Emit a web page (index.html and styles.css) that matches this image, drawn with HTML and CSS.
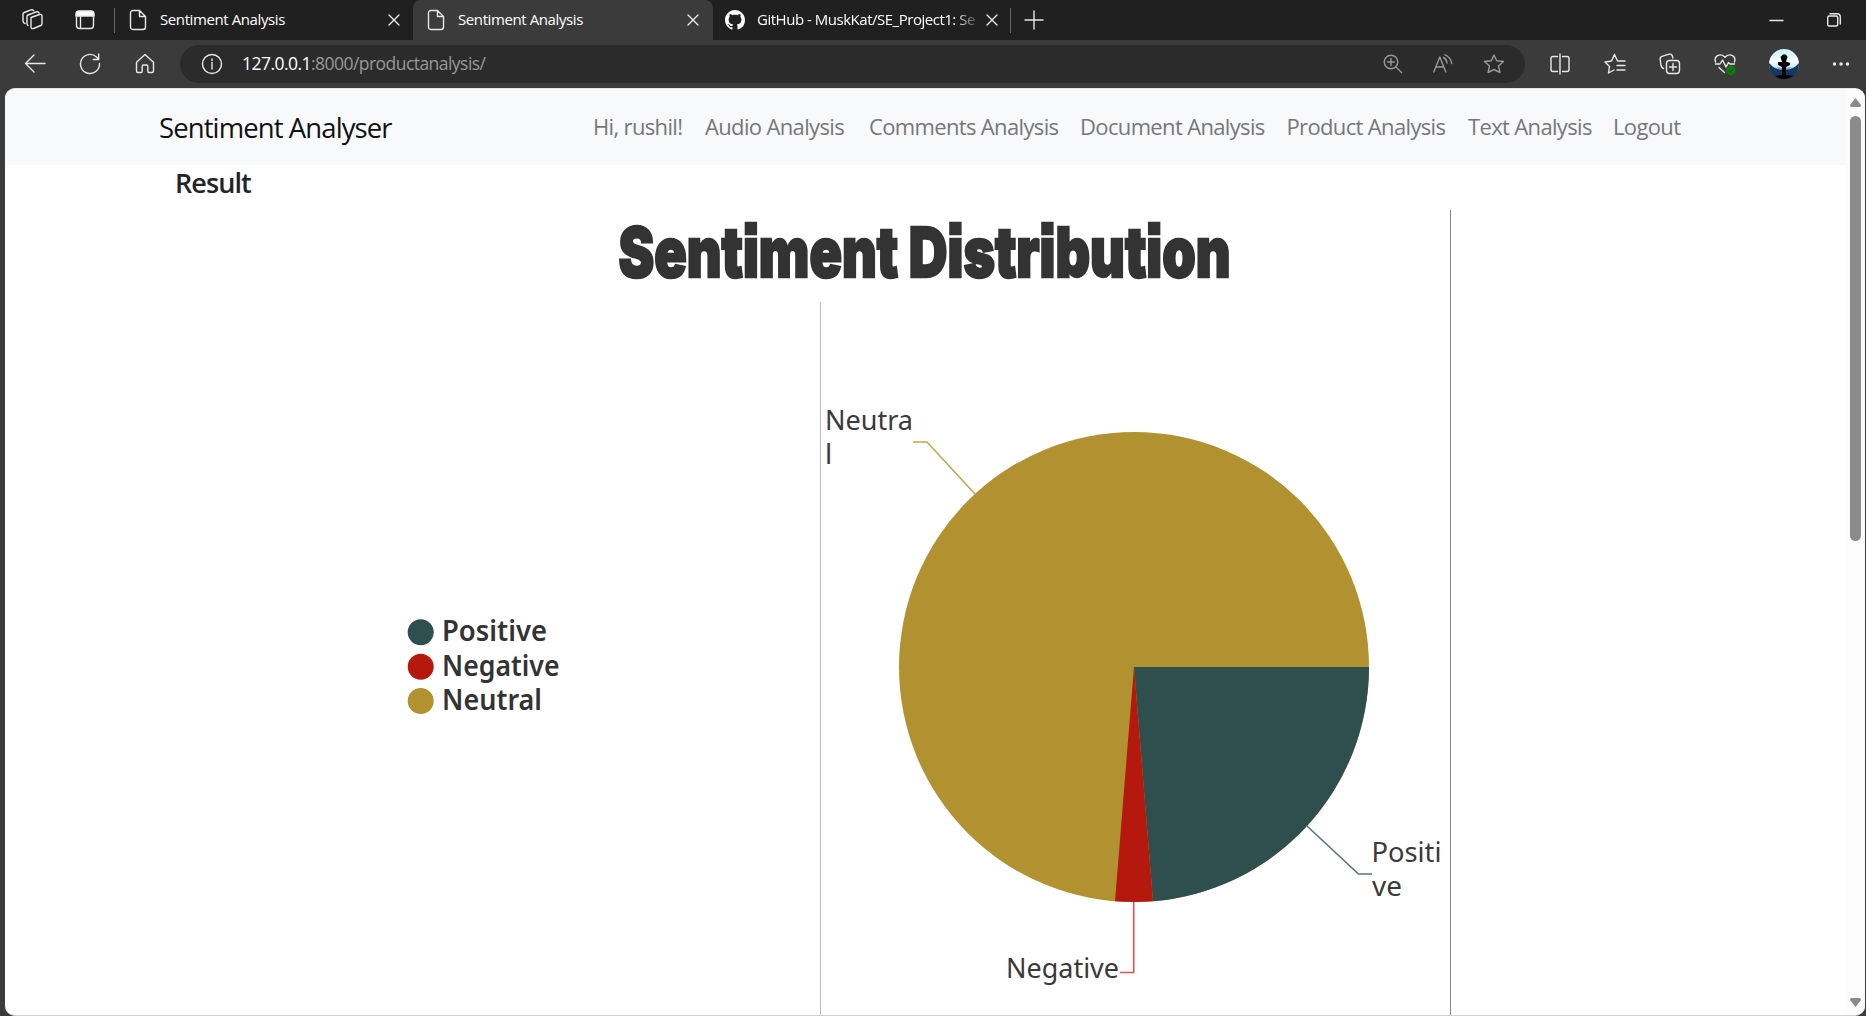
FILE: index.html
```html
<!DOCTYPE html>
<html lang="en">
<head>
<meta charset="utf-8">
<title>Sentiment Analysis</title>
<link rel="stylesheet" href="styles.css">
</head>
<body>
<header class="tabstrip">
  <div class="tab-tools">
    <svg class="ico workspaces" width="22" height="22" viewBox="0 0 22 22"><path d="M9 8.5 17.500 5.500Q20 5 20 7V14.500Q20 16 18.800 16.500L11.500 19.500Q9 20 9 18Z M6 16.500Q5 16 5 14.500V7.500Q5 6.500 6 6L14.500 2.800Q16.500 2.300 17 4 M3 14.500Q1 14 1 12V5Q1 4 2.200 3.500L9 .900Q11 .200 12 2"/></svg>
    <svg class="ico" width="20" height="20" viewBox="0 0 20 20"><rect x="1.500" y="1.500" width="17" height="17" rx="3"/><path d="M5.500 6V18"/><path class="fill" d="M1 6V4Q1 1 4 1H16Q19 1 19 4V6Z"/></svg>
  </div>
  <i class="sep"></i>
  <div class="tab first">
    <svg class="ico" width="18" height="22" viewBox="0 0 18 22"><path d="M4 1.500H10.500L16.500 7.500V18Q16.500 20.500 14 20.500H4Q1.500 20.500 1.500 18V4Q1.500 1.500 4 1.500ZM10.500 1.500V7.500H16.500"/></svg>
    <span class="tab-title">Sentiment Analysis</span>
    <svg class="ico x" width="12" height="12" viewBox="0 0 12 12"><path d="M1 1 11 11M11 1 1 11"/></svg>
  </div>
  <div class="tab active">
    <svg class="ico" width="18" height="22" viewBox="0 0 18 22"><path d="M4 1.500H10.500L16.500 7.500V18Q16.500 20.500 14 20.500H4Q1.500 20.500 1.500 18V4Q1.500 1.500 4 1.500ZM10.500 1.500V7.500H16.500"/></svg>
    <span class="tab-title">Sentiment Analysis</span>
    <svg class="ico x" width="12" height="12" viewBox="0 0 12 12"><path d="M1 1 11 11M11 1 1 11"/></svg>
  </div>
  <div class="tab github">
    <svg class="octo" width="20" height="20" viewBox="0 0 16 16"><path d="M8 0C3.580 0 0 3.580 0 8c0 3.540 2.290 6.530 5.470 7.590.4.070.550-.170.550-.380 0-.190-.010-.820-.010-1.490-2.010.370-2.530-.490-2.690-.940-.090-.230-.480-.940-.820-1.130-.280-.150-.680-.520-.010-.530.630-.010 1.080.580 1.230.820.720 1.210 1.870.870 2.330.660.070-.520.280-.870.510-1.070-1.780-.200-3.640-.890-3.640-3.950 0-.870.310-1.590.820-2.150-.080-.200-.360-1.020.080-2.120 0 0 .670-.210 2.200.820.640-.180 1.320-.270 2-.270s1.360.090 2 .270c1.530-1.040 2.200-.820 2.200-.820.440 1.100.160 1.920.080 2.120.510.560.820 1.270.820 2.150 0 3.070-1.870 3.750-3.650 3.950.290.250.540.730.540 1.480 0 1.070-.010 1.930-.010 2.200 0 .210.150.460.550.380A8.010 8.010 0 0 0 16 8c0-4.420-3.580-8-8-8z"/></svg>
    <span class="tab-title fade">GitHub - MuskKat/SE_Project1: Se</span>
    <svg class="ico x" width="12" height="12" viewBox="0 0 12 12"><path d="M1 1 11 11M11 1 1 11"/></svg>
  </div>
  <i class="sep"></i>
  <svg class="ico plus" width="18" height="18" viewBox="0 0 18 18"><path d="M9 0V18M0 9H18"/></svg>
  <div class="window-buttons">
    <svg class="ico" width="14" height="14" viewBox="0 0 14 14"><path d="M0 7.500H13"/></svg>
    <svg class="ico" width="14" height="14" viewBox="0 0 14 14"><rect x=".7" y="3" width="10" height="10" rx="1.500"/><path d="M3 .700H10Q13.300 .700 13.300 4V11"/></svg>
  </div>
</header>

<div class="toolbar">
  <svg class="ico" width="22" height="22" viewBox="0 0 22 22"><path d="M21 10.500H1.500M10 2 1.500 10.500 10 19"/></svg>
  <svg class="ico" width="22" height="22" viewBox="0 0 22 22"><path d="M20.500 10.500A9.500 9.500 0 1 1 17.500 4L19.500 6M19.700 1V6.500H14.200"/></svg>
  <svg class="ico" width="22" height="22" viewBox="0 0 22 22"><path d="M2.500 9.300 11 1.500 19.500 9.300V18Q19.500 19.500 18 19.500H15Q13.800 19.500 13.800 18V13.500Q13.800 12 12.500 12H9.500Q8.200 12 8.200 13.500V18Q8.200 19.500 7 19.500H4Q2.500 19.500 2.500 18Z"/></svg>
  <div class="address">
    <svg class="ico" width="22" height="22" viewBox="0 0 22 22"><circle cx="11" cy="11" r="9.500"/><path d="M11 9.500V16M11 6V7.500"/></svg>
    <span class="url"><b>127.0.0.1</b>:8000/productanalysis/</span>
    <div class="address-tools">
      <svg class="ico" width="20" height="20" viewBox="0 0 20 20"><circle cx="8" cy="8" r="6.800"/><path d="M13 13 18.500 18.500M8 4.500V11.500M4.500 8H11.500"/></svg>
      <svg class="ico" width="20" height="20" viewBox="0 0 20 20"><path d="M.800 18 6.800 3 12.800 18M3 13H10.700M10.500 3.500Q13.500 5 14 9M12 .800Q17.500 3 18.800 9.500"/></svg>
      <svg class="ico" width="22" height="22" viewBox="0 0 22 22"><path d="M11 2 13.700 7.800 20.500 8.500 15.500 13 17 19.500 11 16.500 5 19.500 6.500 13 1.500 8.500 8.300 7.800Z"/></svg>
    </div>
  </div>
  <div class="tools">
    <svg class="ico" width="22" height="22" viewBox="0 0 22 22"><path d="M8.500 3.500H4Q2 3.500 2 5.500V16.500Q2 18.500 4 18.500H8.500M13.500 3.500H18Q20 3.500 20 5.500V16.500Q20 18.500 18 18.500H13.500M11 1V21"/></svg>
    <svg class="ico" width="22" height="22" viewBox="0 0 22 22"><path d="M13.500 8 10.500 1.500 7.500 8 1 9 5.500 13.500 4.500 20 10 17M13.500 8H21M13 12.500H21M13 17H21"/></svg>
    <svg class="ico" width="22" height="22" viewBox="0 0 22 22"><rect x="7.500" y="7.500" width="13" height="13" rx="3"/><path d="M14 10.500V17.500M10.500 14H17.500M4.500 15.500Q2.500 14.500 2 12.500L1.200 6.500Q.900 4 3 3.300L10 1.200Q13 .600 13.600 3.500L13.800 5"/></svg>
    <svg class="ico" width="22" height="22" viewBox="0 0 22 22"><path d="M1.500 9Q0 4 4 2.300Q8 .800 11 4.200Q14 .800 18 2.300Q22 4 20.500 9M1.500 11H6L8.500 7 12 14 14.500 9.500 16 11H20.500M5 14.500 10.500 19.500"/><circle class="badge" cx="17" cy="17.500" r="4.700"/><path class="tick" d="M15 17.500 16.500 19 19 16"/></svg>
    <svg class="avatar" width="30" height="30" viewBox="0 0 30 30"><defs><clipPath id="round"><circle cx="15" cy="15" r="15"/></clipPath><linearGradient id="sky" x2="0" y2="1"><stop offset="0" stop-color="#c5f1f6"/><stop offset=".4" stop-color="#f8ffff"/><stop offset=".58" stop-color="#dcecf8"/><stop offset=".75" stop-color="#1c4372"/><stop offset="1" stop-color="#06101f"/></linearGradient></defs><g clip-path="url(#round)"><rect width="30" height="30" fill="url(#sky)"/><path fill="#133865" d="M0 14Q6 21 13 21V30H0ZM30 14Q24 21 17 21V30H30Z"/><path d="M13 18 9 16V13L13 13 11.500 8 14 5.500H17L18.500 8 17 12.500 21 14V16L17 18V30H13ZM0 28Q15 24 30 28V30H0Z"/></g></svg>
    <svg class="dots" width="18" height="6" viewBox="0 0 18 6"><circle cx="2.500" cy="3" r="1.700"/><circle cx="9" cy="3" r="1.700"/><circle cx="15.500" cy="3" r="1.700"/></svg>
  </div>
</div>

<div class="viewport">
  <main class="page">
    <nav class="navbar">
      <span class="brand">Sentiment Analyser</span>
      <div class="links"><a>Hi, rushil!</a><a>Audio Analysis</a><a>Comments Analysis</a><a>Document Analysis</a><a>Product Analysis</a><a>Text Analysis</a><a>Logout</a></div>
    </nav>
    <h1 class="result">Result</h1>
    <svg class="chart" width="1100" height="806" viewBox="380 210 1100 806">
      <text class="title" x="618.500" y="277" textLength="612" lengthAdjust="spacingAndGlyphs">Sentiment Distribution</text>
      <path class="divider" d="M820.500 302V1016"/>
      <path class="frame" d="M1450.500 210V1016"/>
      <g class="legend">
        <circle class="positive" cx="420.700" cy="632.300" r="13"/><text x="442" y="640.500" textLength="105" lengthAdjust="spacingAndGlyphs">Positive</text>
        <circle class="negative" cx="420.700" cy="666.700" r="13"/><text x="442" y="675.500" textLength="117.500" lengthAdjust="spacingAndGlyphs">Negative</text>
        <circle class="neutral" cx="420.700" cy="701" r="13"/><text x="442" y="709.500" textLength="100" lengthAdjust="spacingAndGlyphs">Neutral</text>
      </g>
      <circle class="neutral" cx="1134" cy="667" r="235"/>
      <path class="positive" d="M1134 667H1369A235 235 0 0 1 1153 901.200Z"/>
      <path class="negative" d="M1134 667 1153 901.200A235 235 0 0 1 1115 901.200Z"/>
      <g class="leaders">
        <path class="neutral-line" d="M913 442H927L975 494"/>
        <path class="positive-line" d="M1307 826 1358.500 874H1372"/>
        <path class="negative-line" d="M1133.700 902V972.500H1120"/>
      </g>
      <g class="labels">
        <text x="825" y="430" textLength="88" lengthAdjust="spacingAndGlyphs">Neutra</text><text x="825" y="464">l</text>
        <text x="1371.500" y="862" textLength="70" lengthAdjust="spacingAndGlyphs">Positi</text><text x="1372" y="896" textLength="30" lengthAdjust="spacingAndGlyphs">ve</text>
        <text x="1006" y="978" textLength="113" lengthAdjust="spacingAndGlyphs">Negative</text>
      </g>
    </svg>
  </main>
  <aside class="scrollbar">
    <svg width="11" height="9" viewBox="0 0 11 9"><path d="M5.500 0 11 7Q11 9 9.500 9H1.500Q0 9 0 7Z"/></svg>
    <i class="thumb"></i>
    <svg class="down" width="11" height="9" viewBox="0 0 11 9"><path d="M5.500 9 11 2Q11 0 9.500 0H1.500Q0 0 0 2Z"/></svg>
  </aside>
</div>
</body>
</html>
```
FILE: styles.css
```css
* { box-sizing: border-box; }
body { margin: 0; width: 1866px; height: 1016px; overflow: hidden; background: #3b3b3b; font-family: "Open Sans", "Noto Sans", sans-serif; }
svg { display: block; flex: none; }
.ico { fill: none; stroke: #e8e8e8; stroke-width: 1.4; stroke-linejoin: round; stroke-linecap: round; overflow: visible; }
.ico .fill { fill: #fff; }
.ico .badge { fill: #0f7b0f; stroke: none; }
.ico .tick { stroke: #0a4a0a; stroke-width: 1; }
.tabstrip { display: flex; align-items: center; height: 40px; background: #202020; }
.tab-tools { display: flex; align-items: center; gap: 31px; width: 114px; padding-left: 22px; }
.sep { width: 1px; height: 25px; background: #666; }
.tab { display: flex; align-items: center; height: 40px; color: #fff; font-size: 15px; }
.first { width: 298px; padding: 0 13px 0 14px; }
.active { width: 300px; padding: 0 14px 0 14px; background: #3b3b3b; border-radius: 8px 8px 0 0; }
.github { width: 297px; padding: 0 12px 0 12px; }
.tab-title { flex: 1; margin-left: 13px; padding-bottom: 2px; white-space: nowrap; overflow: hidden; letter-spacing: -0.4px; line-height: 24px; }
.github .tab-title { margin: 0 5px 0 12px; letter-spacing: -0.48px; }
.fade { -webkit-mask-image: linear-gradient(90deg, #000 88%, transparent); mask-image: linear-gradient(90deg, #000 88%, transparent); }
.octo { fill: #fff; }
.plus { margin-left: 14px; }
.window-buttons { display: flex; gap: 43px; margin-left: auto; margin-right: 25px; }
.toolbar { display: flex; align-items: center; height: 48px; padding: 0 17px 0 24px; gap: 33px; }
.toolbar > .ico:nth-child(3) { margin-right: -9px; }
.address { display: flex; align-items: center; width: 1345px; height: 38px; flex: none; padding: 0 20px 0 21px; border-radius: 19px; background: #2b2b2b; }
.url { margin-left: 19px; padding-bottom: 2px; color: #999; font-size: 17.5px; letter-spacing: -0.54px; }
.url b { color: #fff; font-weight: 400; }
.address-tools { display: flex; align-items: center; gap: 30px; margin-left: auto; }
.address-tools .ico { stroke: #999; }
.tools { display: flex; align-items: center; gap: 33px; flex: 1; margin-left: -9px; }
.dots { fill: #eee; }
.viewport { display: flex; width: 1860px; height: 928px; margin-left: 5px; background: #fff; border-radius: 10px; border-top: 1px solid #e3e3e3; border-bottom: 1px solid #d0d0d0; overflow: hidden; }
.page { width: 1841px; }
.navbar { display: flex; align-items: center; justify-content: space-between; height: 76px; padding: 0 159px 0 154px; background: #f8f9fb; }
.brand { padding-top: 2px; color: #111; font-size: 27.5px; letter-spacing: -0.9px; line-height: 40px; white-space: nowrap; }
.links { display: grid; grid-template-columns: 112px 164px 211px 206.500px 181.500px 145px 74px; padding-bottom: 2px; color: #777; font-size: 22px; letter-spacing: -0.65px; white-space: nowrap; }
.result { margin: 0; height: 45px; padding: 0 0 0 170px; color: #212529; font-size: 27px; font-weight: 600; line-height: 36px; letter-spacing: -0.9px; }
.chart { margin-left: 375px; }
.title { font: 900 69px Inter, sans-serif; font-feature-settings: "ss07"; fill: #333; stroke: #333; stroke-width: 2.4px; }
.divider { stroke: #bbb; }
.frame { stroke: #888; }
.positive { fill: #2f4f4f; }
.negative { fill: #b5190d; }
.neutral { fill: #b29131; }
.legend text { font: 600 28px "Noto Sans", sans-serif; fill: #333; }
.labels text { font: 400 28px "Noto Sans", sans-serif; fill: #3a3a3a; }
.leaders { fill: none; stroke-width: 1.6; }
.neutral-line { stroke: #c5a64d; }
.positive-line { stroke: #557777; }
.negative-line { stroke: #d35950; }
.scrollbar { display: flex; flex-direction: column; align-items: center; width: 19px; padding: 9px 0 8px; background: #fcfcfc; }
.scrollbar svg { fill: #8b8b8b; }
.thumb { width: 11px; height: 425px; margin-top: 9px; border-radius: 6px; background: #8b8b8b; }
.down { margin-top: auto; }
```
